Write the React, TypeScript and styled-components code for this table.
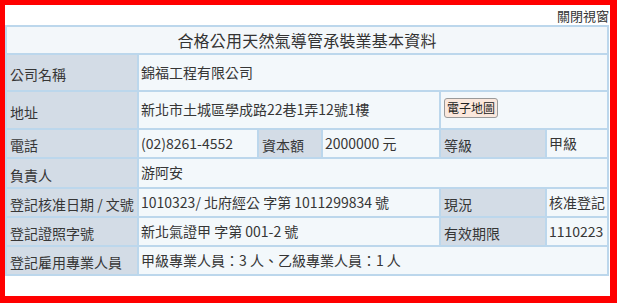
import styled, { createGlobalStyle } from "styled-components";

const GlobalStyle = createGlobalStyle`
  html, body {
    margin: 0;
    padding: 0;
    background: #ffffff;
  }
  body {
    font-family: "Noto Sans CJK TC", "Noto Sans", sans-serif;
    color: #363636;
  }
`;

const Frame = styled.div`
  box-sizing: border-box;
  width: 617px;
  height: 303px;
  border-style: solid;
  border-color: #ff0000;
  border-width: 5px 7px 7px 5px;
  background: #ffffff;
`;

const TopBar = styled.div`
  height: 20px;
  display: flex;
  justify-content: flex-end;
  align-items: center;
  padding-right: 1px;
`;

const CloseLink = styled.a`
  font-size: 13px;
  color: #333333;
  text-decoration: none;
  cursor: pointer;
  line-height: 1;
  margin-top: 1px;
`;

const InfoTable = styled.table`
  width: 604px;
  border-collapse: separate;
  border-spacing: 2px;
  background: #bcd7ec;
  table-layout: fixed;
  font-size: 14px;
`;

const Row = styled.tr<{ $h: number }>`
  height: ${(p) => p.$h}px;
`;

const TitleCell = styled.td`
  background: #f3f7fa;
  text-align: center;
  font-size: 16px;
  padding: 0;
  color: #333333;
  letter-spacing: 0.2px;
`;

const Label = styled.td`
  background: #d3dce6;
  padding: 3px 0 0 3px;
  white-space: nowrap;
  overflow: hidden;
  vertical-align: middle;
`;

const Value = styled.td`
  background: #f3f8fb;
  padding: 0 0 2px 2px;
  white-space: nowrap;
  overflow: hidden;
  vertical-align: middle;
`;

const MapButton = styled.button`
  font-family: "Noto Sans CJK TC", sans-serif;
  font-size: 12px;
  color: #222222;
  background: #fbe8dd;
  border: 1px solid #9a9a9a;
  border-radius: 3px;
  padding: 0 2px;
  height: 20px;
  line-height: 18px;
  margin: 0 0 4px 1px;
  cursor: pointer;
`;

export default function App() {
  return (
    <>
      <GlobalStyle />
      <Frame>
        <TopBar>
          <CloseLink>關閉視窗</CloseLink>
        </TopBar>
        <InfoTable>
          <colgroup>
            <col style={{ width: 130 }} />
            <col style={{ width: 118 }} />
            <col style={{ width: 62 }} />
            <col style={{ width: 116 }} />
            <col style={{ width: 104 }} />
            <col style={{ width: 60 }} />
          </colgroup>
          <tbody>
            <Row $h={26}>
              <TitleCell colSpan={6}>合格公用天然氣導管承裝業基本資料</TitleCell>
            </Row>
            <Row $h={35}>
              <Label>公司名稱</Label>
              <Value colSpan={5}>錦福工程有限公司</Value>
            </Row>
            <Row $h={36}>
              <Label>地址</Label>
              <Value colSpan={3}>新北市土城區學成路22巷1弄12號1樓</Value>
              <Value colSpan={2}>
                <MapButton>電子地圖</MapButton>
              </Value>
            </Row>
            <Row $h={27}>
              <Label>電話</Label>
              <Value>(02)8261-4552</Value>
              <Label>資本額</Label>
              <Value>2000000 元</Value>
              <Label>等級</Label>
              <Value>甲級</Value>
            </Row>
            <Row $h={28}>
              <Label>負責人</Label>
              <Value colSpan={5}>游阿安</Value>
            </Row>
            <Row $h={27}>
              <Label>登記核准日期 / 文號</Label>
              <Value colSpan={3}>1010323/ 北府經公 字第 1011299834 號</Value>
              <Label>現況</Label>
              <Value>核准登記</Value>
            </Row>
            <Row $h={27}>
              <Label>登記證照字號</Label>
              <Value colSpan={3}>新北氣證甲 字第 001-2 號</Value>
              <Label>有效期限</Label>
              <Value>1110223</Value>
            </Row>
            <Row $h={27}>
              <Label>登記雇用專業人員</Label>
              <Value colSpan={5}>甲級專業人員：3 人、乙級專業人員：1 人</Value>
            </Row>
          </tbody>
        </InfoTable>
      </Frame>
    </>
  );
}
